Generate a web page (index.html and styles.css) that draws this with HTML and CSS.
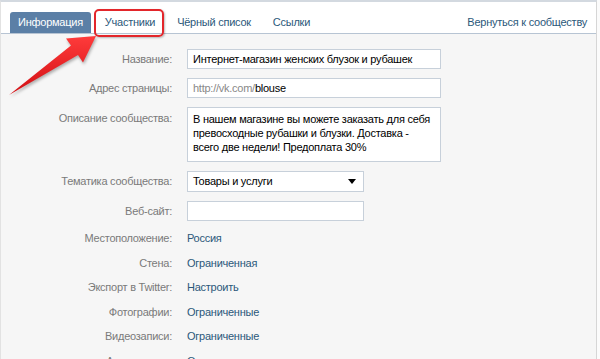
FILE: index.html
```html
<!DOCTYPE html>
<html lang="ru">
<head>
<meta charset="utf-8">
<link rel="stylesheet" href="styles.css">
</head>
<body>
<div class="page">
  <div class="tabs">
    <a class="tab active">Информация</a>
    <a class="tab">Участники</a>
    <a class="tab">Чёрный список</a>
    <a class="tab">Ссылки</a>
    <a class="back">Вернуться к сообществу</a>
  </div>
  <div class="form">
    <div class="row">
      <div class="label">Название:</div>
      <div class="input wide">Интернет-магазин женских блузок и рубашек</div>
    </div>
    <div class="row">
      <div class="label">Адрес страницы:</div>
      <div class="input wide"><span class="muted">http://vk.com/</span>blouse</div>
    </div>
    <div class="row">
      <div class="label top">Описание сообщества:</div>
      <div class="input wide area">В нашем магазине вы можете заказать для себя<br>превосходные рубашки и блузки. Доставка -<br>всего две недели! Предоплата 30%</div>
    </div>
    <div class="row">
      <div class="label">Тематика сообщества:</div>
      <div class="input narrow select">Товары и услуги<span class="caret"></span></div>
    </div>
    <div class="row">
      <div class="label">Веб-сайт:</div>
      <div class="input narrow"></div>
    </div>
    <div class="row info first">
      <div class="label">Местоположение:</div>
      <a class="value">Россия</a>
    </div>
    <div class="row info">
      <div class="label">Стена:</div>
      <a class="value">Ограниченная</a>
    </div>
    <div class="row info">
      <div class="label">Экспорт в Twitter:</div>
      <a class="value">Настроить</a>
    </div>
    <div class="row info">
      <div class="label">Фотографии:</div>
      <a class="value">Ограниченные</a>
    </div>
    <div class="row info">
      <div class="label">Видеозаписи:</div>
      <a class="value">Ограниченные</a>
    </div>
    <div class="row info">
      <div class="label">Аудиозаписи:</div>
      <a class="value">Ограниченные</a>
    </div>
  </div>
  <div class="highlight"></div>
  <svg class="arrow" width="110" height="110" viewBox="0 0 110 110">
    <defs>
      <linearGradient id="ag" x1="0" y1="0" x2="0" y2="1">
        <stop offset="0" stop-color="#ff3b3b"/>
        <stop offset="1" stop-color="#d10f14"/>
      </linearGradient>
    </defs>
    <polygon points="9,95 71,45.5 66,38.5 96,36 83,62.5 78,55" fill="url(#ag)"/>
  </svg>
</div>
</body>
</html>
```
FILE: styles.css
```css
* { box-sizing: border-box; }
html, body { margin: 0; padding: 0; }
body {
  background: #fbfbfb;
  font-family: "Liberation Sans", Arial, sans-serif;
  font-size: 11px;
  letter-spacing: -0.25px;
  color: #000;
}
.page {
  position: relative;
  width: 597px;
  height: 359px;
  overflow: hidden;
  background: #f6f6f6;
  border-top: 2px solid #d3d9e0;
  border-left: 1px solid #e2e2e2;
  border-right: 1px solid #d6d6d6;
}
.tabs {
  display: flex;
  align-items: flex-end;
  gap: 6px;
  height: 32px;
  padding: 0 9px 0 9px;
  background: #fff;
  border-bottom: 1px solid #b7c4d3;
}
.tab {
  height: 21px;
  line-height: 21px;
  padding: 0 8px;
  color: #2b587a;
  border-radius: 3px 3px 0 0;
  white-space: nowrap;
}
.tab.active {
  background: #5b7fa6;
  color: #fff;
}
.back {
  margin-left: auto;
  height: 21px;
  line-height: 21px;
  color: #2b587a;
  white-space: nowrap;
}
.form {
  padding-top: 15px;
}
.row {
  display: flex;
  gap: 15px;
  margin-bottom: 9px;
}
.label {
  width: 171px;
  flex: none;
  text-align: right;
  color: #7a7a7a;
  line-height: 20px;
  white-space: nowrap;
}
.label.top {
  line-height: 14px;
  padding-top: 4px;
}
.input {
  height: 20px;
  line-height: 18px;
  padding: 0 5px;
  background: #fff;
  border: 1px solid #c7d0da;
  white-space: nowrap;
  position: relative;
}
.wide { width: 254px; }
.narrow { width: 177px; }
.area {
  height: 55px;
  line-height: 14px;
  padding-top: 4px;
}
.select { height: 21px; line-height: 19px; }
.muted { color: #888; }
.caret {
  position: absolute;
  right: 7px;
  top: 7px;
  width: 0;
  height: 0;
  border-left: 4px solid transparent;
  border-right: 4px solid transparent;
  border-top: 5px solid #000;
}
.row.info {
  margin-bottom: 8.5px;
}
.row.info .label, .row.info .value {
  line-height: 16px;
}
.row.info.first { margin-top: 8px; }
.value {
  color: #2b587a;
  white-space: nowrap;
}
.highlight {
  position: absolute;
  left: 93px;
  top: 7px;
  width: 70px;
  height: 28px;
  border: 2px solid #e3262b;
  border-radius: 5px;
  box-shadow: 1px 1px 2px rgba(0,0,0,0.25);
}
.arrow {
  position: absolute;
  left: -1px;
  top: -2px;
  filter: drop-shadow(1px 2px 1.5px rgba(0,0,0,0.3));
}
```
